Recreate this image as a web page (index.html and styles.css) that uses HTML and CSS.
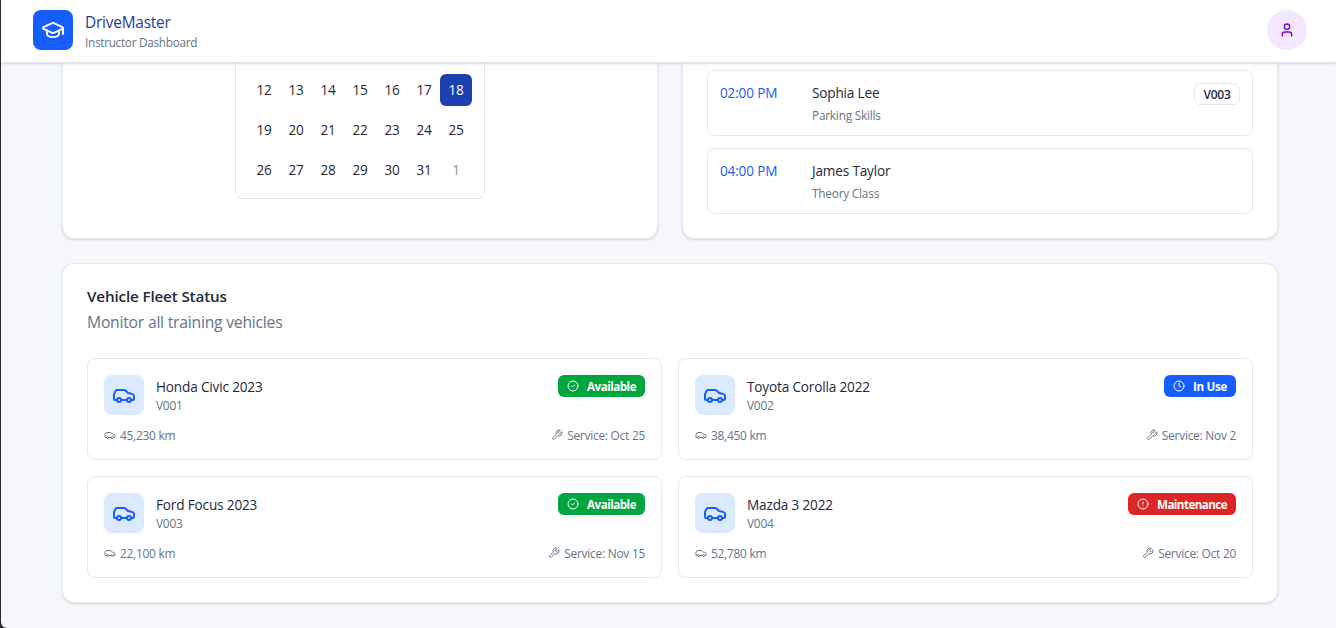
FILE: index.html
```html
<!DOCTYPE html>
<html lang="en">
<head>
<meta charset="utf-8">
<title>DriveMaster</title>
<link rel="stylesheet" href="styles.css">
</head>
<body>
<svg class="sprite" aria-hidden="true">
  <symbol id="cap" viewBox="0 0 24 24"><path d="M21.42 10.922a1 1 0 0 0-.019-1.838L12.83 5.18a2 2 0 0 0-1.66 0L2.6 9.08a1 1 0 0 0 0 1.832l8.57 3.908a2 2 0 0 0 1.66 0z"/><path d="M22 10v6"/><path d="M6 12.5V16a6 3 0 0 0 12 0v-3.5"/></symbol>
  <symbol id="user" viewBox="0 0 24 24"><path d="M19 21v-2a4 4 0 0 0-4-4H9a4 4 0 0 0-4 4v2"/><circle cx="12" cy="7" r="4"/></symbol>
  <symbol id="car" viewBox="0 0 24 24"><path d="M19 17h2c.6 0 1-.4 1-1v-3c0-.9-.7-1.7-1.5-1.9C18.7 10.6 16 10 16 10s-1.3-1.4-2.2-2.3c-.5-.4-1.1-.7-1.8-.7H5c-.6 0-1.1.4-1.4.9l-1.4 2.9A3.7 3.7 0 0 0 2 12v4c0 .6.4 1 1 1h2"/><circle cx="7" cy="17" r="2"/><path d="M9 17h6"/><circle cx="17" cy="17" r="2"/></symbol>
  <symbol id="wrench" viewBox="0 0 24 24"><path d="M14.7 6.3a1 1 0 0 0 0 1.4l1.6 1.6a1 1 0 0 0 1.4 0l3.77-3.77a6 6 0 0 1-7.94 7.94l-6.91 6.91a2.12 2.12 0 0 1-3-3l6.91-6.91a6 6 0 0 1 7.94-7.94l-3.76 3.76z"/></symbol>
  <symbol id="check" viewBox="0 0 24 24"><circle cx="12" cy="12" r="10"/><path d="m9 12 2 2 4-4"/></symbol>
  <symbol id="clock" viewBox="0 0 24 24"><circle cx="12" cy="12" r="10"/><path d="M12 6v6l4 2"/></symbol>
  <symbol id="alert" viewBox="0 0 24 24"><circle cx="12" cy="12" r="10"/><path d="M12 8v4M12 16h.01"/></symbol>
</svg>
<div class="page">
  <header class="header">
    <div class="logo"><svg class="icon icon-lg"><use href="#cap"/></svg></div>
    <div class="brand">
      <div class="brand-name">DriveMaster</div>
      <div class="brand-sub">Instructor Dashboard</div>
    </div>
    <div class="avatar"><svg class="icon icon-md"><use href="#user"/></svg></div>
  </header>
  <main class="main">
    <div class="top-row">
      <section class="card card-open calendar-card">
        <div class="calendar">
          <span>12</span><span>13</span><span>14</span><span>15</span><span>16</span><span>17</span><span class="selected">18</span>
          <span>19</span><span>20</span><span>21</span><span>22</span><span>23</span><span>24</span><span>25</span>
          <span>26</span><span>27</span><span>28</span><span>29</span><span>30</span><span>31</span><span class="outside">1</span>
        </div>
      </section>
      <section class="card card-open schedule">
        <div class="lesson">
          <div class="time">02:00 PM</div>
          <div class="lesson-info"><div class="name">Sophia Lee</div><div class="lesson-type">Parking Skills</div></div>
          <div class="tag">V003</div>
        </div>
        <div class="lesson">
          <div class="time">04:00 PM</div>
          <div class="lesson-info"><div class="name">James Taylor</div><div class="lesson-type">Theory Class</div></div>
        </div>
      </section>
    </div>
    <section class="card fleet">
      <h2 class="fleet-title">Vehicle Fleet Status</h2>
      <p class="fleet-sub">Monitor all training vehicles</p>
      <div class="vehicles">
        <article class="vehicle">
          <div class="vehicle-top">
            <div class="car-box"><svg class="icon icon-lg"><use href="#car"/></svg></div>
            <div class="vehicle-info"><div class="name">Honda Civic 2023</div><div class="small">V001</div></div>
            <div class="badge available"><svg class="icon icon-sm"><use href="#check"/></svg><span>Available</span></div>
          </div>
          <div class="vehicle-foot small"><span class="meta"><svg class="icon icon-sm"><use href="#car"/></svg>45,230 km</span><span class="meta"><svg class="icon icon-sm"><use href="#wrench"/></svg>Service: Oct 25</span></div>
        </article>
        <article class="vehicle">
          <div class="vehicle-top">
            <div class="car-box"><svg class="icon icon-lg"><use href="#car"/></svg></div>
            <div class="vehicle-info"><div class="name">Toyota Corolla 2022</div><div class="small">V002</div></div>
            <div class="badge in-use"><svg class="icon icon-sm"><use href="#clock"/></svg><span>In Use</span></div>
          </div>
          <div class="vehicle-foot small"><span class="meta"><svg class="icon icon-sm"><use href="#car"/></svg>38,450 km</span><span class="meta"><svg class="icon icon-sm"><use href="#wrench"/></svg>Service: Nov 2</span></div>
        </article>
        <article class="vehicle">
          <div class="vehicle-top">
            <div class="car-box"><svg class="icon icon-lg"><use href="#car"/></svg></div>
            <div class="vehicle-info"><div class="name">Ford Focus 2023</div><div class="small">V003</div></div>
            <div class="badge available"><svg class="icon icon-sm"><use href="#check"/></svg><span>Available</span></div>
          </div>
          <div class="vehicle-foot small"><span class="meta"><svg class="icon icon-sm"><use href="#car"/></svg>22,100 km</span><span class="meta"><svg class="icon icon-sm"><use href="#wrench"/></svg>Service: Nov 15</span></div>
        </article>
        <article class="vehicle">
          <div class="vehicle-top">
            <div class="car-box"><svg class="icon icon-lg"><use href="#car"/></svg></div>
            <div class="vehicle-info"><div class="name">Mazda 3 2022</div><div class="small">V004</div></div>
            <div class="badge maintenance"><svg class="icon icon-sm"><use href="#alert"/></svg><span>Maintenance</span></div>
          </div>
          <div class="vehicle-foot small"><span class="meta"><svg class="icon icon-sm"><use href="#car"/></svg>52,780 km</span><span class="meta"><svg class="icon icon-sm"><use href="#wrench"/></svg>Service: Oct 20</span></div>
        </article>
      </div>
    </section>
  </main>
</div>
</body>
</html>
```
FILE: styles.css
```css
* { box-sizing: border-box; }
body {
  margin: 0;
  height: 628px;
  overflow: hidden;
  background: #2b2b2e;
  font-family: "Segoe UI", "Open Sans", "Noto Sans", sans-serif;
  font-size: 13.6px;
  letter-spacing: -0.17px;
  color: #1e293b;
}
h2, p { margin: 0; }
.sprite { display: none; }
.icon {
  display: block;
  flex: none;
  fill: none;
  stroke: currentColor;
  stroke-width: 2;
  stroke-linecap: round;
  stroke-linejoin: round;
}
.icon-lg { width: 24px; height: 24px; }
.icon-md { width: 16px; height: 16px; }
.icon-sm { width: 12px; height: 12px; }

.page {
  height: 628px;
  margin-left: 1px;
  background: #f5f7fb;
  border-bottom-left-radius: 6px;
  overflow: hidden;
}
.header {
  position: relative;
  z-index: 1;
  height: 63px;
  padding: 10px 29px 12px 32px;
  display: flex;
  background: #fff;
  border-bottom: 1px solid #e2e5ea;
  box-shadow: 0 1px 3px rgba(0,0,0,.1), 0 1px 2px -1px rgba(0,0,0,.1);
}
.logo {
  width: 40px;
  height: 40px;
  display: grid;
  place-items: center;
  border-radius: 8px;
  background: #155dfc;
  color: #fff;
}
.brand { flex: 1; padding-left: 12px; }
.brand-name {
  font-size: 15.4px;
  line-height: 26px;
  color: #1e3a9a;
  letter-spacing: -0.2px;
}
.brand-sub {
  font-size: 11.8px;
  line-height: 12px;
  color: #64748b;
  letter-spacing: -0.3px;
}
.avatar {
  width: 40px;
  height: 40px;
  display: grid;
  place-items: center;
  border-radius: 50%;
  background: #f3e8ff;
  color: #8200db;
}
.main { padding: 0 58px 0 61px; }
.top-row {
  display: grid;
  grid-template-columns: 1fr 1fr;
  gap: 24px;
}
.card {
  background: #fff;
  border: 1px solid #e2e8f0;
  border-radius: 12px;
  box-shadow: 0 1px 3px rgba(0,0,0,.1), 0 1px 2px -1px rgba(0,0,0,.1);
}
.card-open {
  height: 176px;
  border-top: 0;
  border-radius: 0 0 12px 12px;
}
.calendar-card { display: flex; justify-content: center; align-items: flex-start; }
.calendar {
  width: 250px;
  height: 136px;
  padding: 11px 12px 0;
  display: grid;
  grid-template-columns: repeat(7, 32px);
  grid-auto-rows: 32px;
  row-gap: 8px;
  border: 1px solid #e2e8f0;
  border-top: 0;
  border-radius: 0 0 6px 6px;
}
.calendar span {
  text-align: center;
  line-height: 32px;
  border-radius: 6px;
}
.calendar .selected { background: #1e40af; color: #fff; }
.calendar .outside { color: #8791a0; }
.schedule {
  padding: 7px 24px 0;
  display: flex;
  flex-direction: column;
  gap: 12px;
}
.lesson {
  height: 66px;
  padding: 12px;
  display: flex;
  border: 1px solid #e2e8f0;
  border-radius: 8px;
}
.time { width: 92px; line-height: 20px; color: #155dfc; }
.lesson-info { flex: 1; }
.name { line-height: 20px; }
.lesson-type {
  margin-top: 4px;
  font-size: 11.8px;
  line-height: 16px;
  letter-spacing: -0.2px;
  color: #64748b;
}
.tag {
  width: 46px;
  height: 22px;
  text-align: center;
  font-size: 12px;
  font-weight: 600;
  line-height: 21px;
  letter-spacing: -0.25px;
  border: 1px solid #e2e8f0;
  border-radius: 6px;
}
.fleet { margin-top: 24px; height: 340px; padding: 24px; }
.fleet-title {
  font-size: 15.2px;
  font-weight: 600;
  line-height: 16px;
  letter-spacing: -0.14px;
}
.fleet-sub {
  margin-top: 6px;
  font-size: 15.7px;
  line-height: 24px;
  letter-spacing: -0.22px;
  color: #64748b;
}
.vehicles {
  margin-top: 24px;
  display: grid;
  grid-template-columns: 1fr 1fr;
  gap: 16px;
}
.vehicle {
  height: 102px;
  padding: 16px;
  border: 1px solid #e2e8f0;
  border-radius: 8px;
}
.vehicle-top { display: flex; align-items: flex-start; }
.car-box {
  width: 40px;
  height: 40px;
  display: grid;
  place-items: center;
  border-radius: 8px;
  background: #dbeafe;
  color: #155dfc;
}
.vehicle-info { flex: 1; padding: 2px 0 0 12px; }
.small { font-size: 11.9px; line-height: 17px; letter-spacing: -0.24px; color: #64748b; }
.badge {
  height: 22px;
  padding: 0 9px;
  display: flex;
  align-items: center;
  gap: 8px;
  border-radius: 6px;
  color: #fff;
  font-size: 11.6px;
  font-weight: 700;
  letter-spacing: -0.5px;
}
.available { background: #00a63e; }
.in-use { background: #155dfc; letter-spacing: -0.3px; }
.maintenance { background: #dc2626; letter-spacing: -0.55px; }
.vehicle-foot {
  margin-top: 12px;
  display: flex;
  justify-content: space-between;
}
.meta { display: flex; align-items: center; gap: 4px; }
.meta .icon { margin-bottom: 1px; }
```
